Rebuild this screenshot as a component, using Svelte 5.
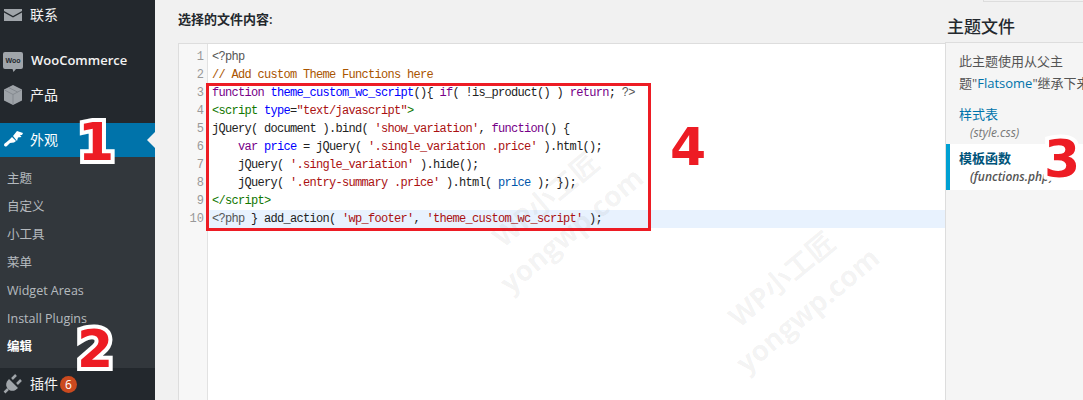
<script lang="ts">
	const subItems = [
		{ label: '主题' },
		{ label: '自定义' },
		{ label: '小工具' },
		{ label: '菜单' },
		{ label: 'Widget Areas' },
		{ label: 'Install Plugins' },
		{ label: '编辑', current: true }
	];

	const marks = [
		{ cls: 'wm-a', top: 'WP小工匠', bottom: 'yongwp.com' },
		{ cls: 'wm-b', top: 'WP小工匠', bottom: 'yongwp.com' }
	];
</script>

<div class="page">
	<aside class="sidebar">
		<div class="row contact">
			<svg class="icon" viewBox="0 0 20 20" width="20" height="20">
				<path d="M1 4h18v2l-9 5-9-5z" fill="#a0a5aa" />
				<path d="M1 7.500l9 5 9-5V16H1z" fill="#a0a5aa" />
			</svg>
			<span class="label">联系</span>
		</div>
		<div class="row woo">
			<svg class="icon" viewBox="0 0 20 22" width="20" height="22">
				<path d="M2 1h16a2 2 0 0 1 2 2v13a2 2 0 0 1-2 2h-5l-2.500 3-1-3H2a2 2 0 0 1-2-2V3a2 2 0 0 1 2-2z" fill="#a0a5aa" />
				<text x="10" y="12" class="woo-text">Woo</text>
			</svg>
			<span class="label woo-label">WooCommerce</span>
		</div>
		<div class="row product">
			<svg class="icon" viewBox="0 0 20 22" width="20" height="22">
				<path d="M10 1l9 4.500v11L10 21l-9-4.500v-11z" fill="#9ea3a8" />
				<path d="M1.500 6l8.500 4.500L18.500 6M10 10.500V21M5.500 3.500l9 4.500" fill="none" stroke="#7f848a" stroke-width="0.8" />
			</svg>
			<span class="label">产品</span>
		</div>
		<div class="row active">
			<svg class="icon" viewBox="0 0 20 20" width="20" height="20">
				<path d="M10 6l4-5 6 2-1 2h-2l1.500 2-3.500.500L14 11z" fill="#fff" />
				<path d="M9 7l4 4-2 1.500-4 .500-3 3c-1.300 1-2.700.500-3-1 0-1 1-2 2-2.500L6 10z" fill="#fff" />
			</svg>
			<span class="label">外观</span>
			<span class="notch"></span>
		</div>
		<ul class="submenu">
			{#each subItems as item}
				<li class:current={item.current}>{item.label}</li>
			{/each}
		</ul>
		<div class="row plugins">
			<svg class="icon" viewBox="0 0 20 20" width="20" height="20">
				<path d="M9 5l4-4M14 10l4-4" stroke="#a0a5aa" stroke-width="2.500" fill="none" />
				<path d="M6 5l9 9-2.500 2c-2.500 1.500-5.500 1-7.500-1-2-2-2.500-5-1-7.500z" fill="#a0a5aa" />
				<path d="M5 15l-3.500 3.500" stroke="#a0a5aa" stroke-width="2.500" fill="none" />
			</svg>
			<span class="label">插件</span>
			<span class="badge">6</span>
		</div>
	</aside>

	<main class="content">
		<h3 class="file-heading">选择的文件内容:</h3>
		<div class="editor">
			<div class="gutter">
				{#each Array(10) as _, i}
					<div class="num">{i + 1}</div>
				{/each}
			</div>
			<div class="code">
				<div class="ln"><span class="m">&lt;?php</span></div>
				<div class="ln"><span class="c">// Add custom Theme Functions here</span></div>
				<div class="ln"><span class="k">function</span> <span class="d">theme_custom_wc_script</span>(){'{'} <span class="k">if</span>( !is_product() ) <span class="k">return</span>; <span class="m">?&gt;</span></div>
				<div class="ln"><span class="t">&lt;script</span> <span class="d">type</span>=<span class="s">"text/javascript"</span><span class="t">&gt;</span></div>
				<div class="ln">jQuery( document ).bind( <span class="s">'show_variation'</span>, <span class="k">function</span>() {'{'}</div>
				<div class="ln indent"><span class="k">var</span> <span class="d">price</span> = jQuery( <span class="s">'.single_variation .price'</span> ).html();</div>
				<div class="ln indent">jQuery( <span class="s">'.single_variation'</span> ).hide();</div>
				<div class="ln indent">jQuery( <span class="s">'.entry-summary .price'</span> ).html( <span class="v">price</span> ); {'}'});</div>
				<div class="ln"><span class="t">&lt;/script&gt;</span></div>
				<div class="ln on"><span class="m">&lt;?php</span> {'}'} add_action( <span class="s">'wp_footer'</span>, <span class="s">'theme_custom_wc_script'</span> );</div>
			</div>
		</div>
	</main>

	<aside class="files">
		<div class="select-edge"></div>
		<h2 class="files-title">主题文件</h2>
		<div class="files-panel">
			<p class="note">此主题使用从父主<br />题"<span class="link">Flatsome</span>"继承下来</p>
			<div class="file">
				<div class="file-name">样式表</div>
				<div class="file-path">(style.css)</div>
			</div>
			<div class="file selected">
				<div class="file-name">模板函数</div>
				<div class="file-path">(functions.php)</div>
			</div>
		</div>
	</aside>

	<div class="red-box"></div>
	<span class="step s1">1</span>
	<span class="step s2">2</span>
	<span class="step s3">3</span>
	<span class="step s4">4</span>

	{#each marks as mark}
		<div class="watermark {mark.cls}">
			<div>{mark.top}</div>
			<div>{mark.bottom}</div>
		</div>
	{/each}
</div>

<style>
	:global(body) {
		margin: 0;
		background: #f1f1f1;
	}

	.page {
		position: relative;
		display: flex;
		width: 1083px;
		height: 400px;
		overflow: hidden;
		background: #f1f1f1;
		font-family: 'Open Sans', 'Noto Sans CJK SC', sans-serif;
		color: #444;
	}

	.sidebar {
		flex: 0 0 155px;
		background: #23282d;
		color: #eee;
		font-size: 14px;
	}

	.row {
		display: flex;
		align-items: center;
		height: 34px;
		padding-left: 3px;
		position: relative;
		box-sizing: border-box;
	}

	.icon {
		flex: none;
		width: 20px;
	}

	.label {
		margin-left: 7px;
		line-height: 1;
		color: #f3f3f3;
	}

	.contact {
		height: 30px;
		margin-bottom: 13px;
	}

	.woo {
		margin-bottom: 1px;
	}

	.woo .icon {
		margin-top: 3px;
	}

	.woo-text {
		font: bold 7px 'Liberation Sans', sans-serif;
		fill: #23282d;
		text-anchor: middle;
	}

	.woo-label {
		font-weight: 600;
		font-size: 13px;
		margin-left: 8px;
	}

	.product {
		margin-bottom: 11px;
	}

	.active {
		background: #0073aa;
	}

	.active .label {
		color: #fff;
	}

	.notch {
		position: absolute;
		right: 0;
		top: 9px;
		border: 8px solid transparent;
		border-right-color: #f1f1f1;
		border-left-width: 0;
	}

	.submenu {
		list-style: none;
		margin: 0;
		padding: 8px 0 7px 7px;
		background: #32373c;
		font-size: 12.5px;
		color: rgba(240, 245, 250, 0.7);
	}

	.submenu li {
		height: 28px;
		line-height: 28px;
	}

	.submenu .current {
		color: #fff;
		font-weight: 700;
	}

	.plugins {
		height: 32px;
	}

	.badge {
		width: 17px;
		height: 17px;
		margin-left: 2px;
		border-radius: 50%;
		background: #ca4a1f;
		color: #fff;
		font-size: 12px;
		line-height: 17px;
		text-align: center;
	}

	.content {
		flex: 0 0 790px;
		box-sizing: border-box;
		padding-left: 23px;
	}

	.file-heading {
		margin: 0;
		height: 43px;
		box-sizing: border-box;
		padding-top: 11px;
		font-size: 13px;
		line-height: 17px;
		font-weight: 600;
		color: #23282d;
	}

	.editor {
		display: flex;
		height: 357px;
		box-sizing: border-box;
		background: #fff;
		border: 1px solid #ddd;
		border-right: 0;
		border-bottom: 0;
		font-family: 'Liberation Mono', 'Noto Sans CJK SC', monospace;
		font-size: 12px;
		letter-spacing: -0.7px;
		line-height: 18px;
		color: #222;
	}

	.gutter {
		flex: 0 0 29px;
		padding: 4px 3px 0 0;
		box-sizing: border-box;
		background: #f7f7f7;
		border-right: 1px solid #e2e2e2;
		color: #999;
		text-align: right;
		letter-spacing: 0;
		font-size: 12px;
	}

	.code {
		flex: 1;
		padding-top: 4px;
	}

	.ln {
		height: 18px;
		padding-left: 4px;
		white-space: pre;
	}

	.indent {
		padding-left: 30px;
	}

	.on {
		background: #e8f2fe;
	}

	.m { color: #555; }
	.c { color: #aa5500; }
	.k { color: #770088; }
	.d { color: #0000ff; }
	.t { color: #117700; }
	.s { color: #aa1111; }
	.v { color: #0055aa; }

	.files {
		flex: 1;
		min-width: 0;
		position: relative;
	}

	.select-edge {
		position: absolute;
		top: 0;
		left: 38px;
		right: 0;
		height: 1px;
		border: 1px solid #ddd;
		border-top: 0;
		border-right: 0;
	}

	.files-title {
		margin: 0;
		height: 43px;
		box-sizing: border-box;
		padding: 15px 0 0 2px;
		font-size: 17px;
		line-height: 24px;
		font-weight: 500;
		color: #23282d;
		border-bottom: 1px solid #ddd;
		white-space: nowrap;
	}

	.files-panel {
		height: 357px;
		box-sizing: border-box;
		background: #f5f5f5;
		border-left: 1px solid #ddd;
		font-size: 13px;
	}

	.note {
		margin: 0;
		padding: 7px 0 0 13px;
		line-height: 22px;
		color: #555;
		white-space: nowrap;
	}

	.link {
		color: #0073aa;
	}

	.file {
		padding-left: 13px;
		height: 46px;
		box-sizing: border-box;
		white-space: nowrap;
	}

	.file:first-of-type {
		margin-top: 6px;
	}

	.file-name {
		padding-top: 4px;
		line-height: 20px;
		color: #0073aa;
	}

	.file-path {
		padding-left: 11px;
		font-size: 12px;
		font-style: italic;
		line-height: 18px;
		color: #777;
	}

	.selected {
		background: #fff;
		border-left: 4px solid #00a0d2;
		padding-left: 9px;
		margin-top: -2px;
	}

	.selected .file-name {
		font-weight: 600;
		color: #00547a;
	}

	.selected .file-path {
		font-weight: 600;
		color: #555;
	}

	.red-box {
		position: absolute;
		left: 206px;
		top: 83px;
		width: 445px;
		height: 148px;
		box-sizing: border-box;
		border: 3px solid #ed1c24;
	}

	.step {
		position: absolute;
		font-family: 'DejaVu Sans', sans-serif;
		font-weight: 700;
		font-size: 52px;
		line-height: 60px;
		color: #ed1c24;
		-webkit-text-stroke: 8px #fff;
		paint-order: stroke fill;
	}

	.s1 { left: 78px; top: 112px; }
	.s2 { left: 77px; top: 319px; }
	.s3 { left: 1044px; top: 129px; }
	.s4 { left: 670px; top: 117px; -webkit-text-stroke-width: 5px; }

	.watermark {
		position: absolute;
		transform: rotate(-40deg);
		font-family: 'Open Sans', 'Noto Sans CJK SC', sans-serif;
		font-weight: 700;
		font-size: 28px;
		line-height: 40px;
		text-align: center;
		color: rgba(90, 90, 90, 0.08);
		white-space: nowrap;
		pointer-events: none;
	}

	.wm-a { left: 470px; top: 174px; }
	.wm-b { left: 706px; top: 254px; }
</style>
